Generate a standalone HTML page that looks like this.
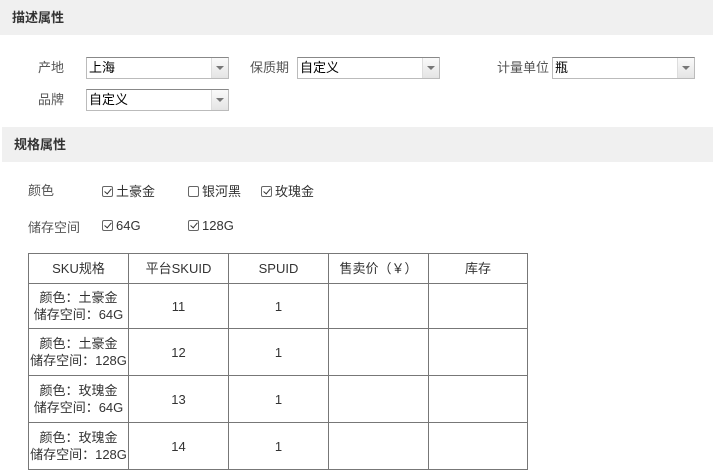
<!DOCTYPE html>
<html><head><meta charset="utf-8"><style>
*{margin:0;padding:0;box-sizing:border-box}
body{width:713px;height:469px;overflow:hidden;background:#fff;font-family:"Liberation Sans","Noto Sans CJK SC",sans-serif;font-size:13px;color:#333;position:relative}
.a{position:absolute;white-space:nowrap}
.hd{position:absolute;background:#f0f0f0;font-weight:bold;color:#333;padding-left:12px;line-height:35px;height:35px}
.lbl{color:#555}
.sel{position:absolute;height:22px;border:1px solid #bbb;border-top-color:#888;background:#fff;line-height:20px;padding-left:2px;color:#000}
.sel i{position:absolute;right:0;top:0;width:17px;height:20px;background:linear-gradient(#fafafa,#e4e4e4);border-left:1px solid #ddd}
.sel i:after{content:"";position:absolute;left:4px;top:8px;border-left:4px solid transparent;border-right:4px solid transparent;border-top:4px solid #777}
.cb{display:inline-block;width:11px;height:11px;border:1px solid #666;border-radius:2px;vertical-align:-1px;margin-right:3px;position:relative}
.cb.c:after{content:"";position:absolute;left:3px;top:0px;width:3px;height:6px;border:solid #333;border-width:0 1.5px 1.5px 0;transform:rotate(40deg)}
table{position:absolute;left:28px;top:253px;border-collapse:collapse;table-layout:fixed}
td{border:1px solid #777;text-align:center;font-size:13px;color:#333;line-height:17px;padding:0}
</style></head><body>
<div class="hd" style="left:0;top:0;width:713px">描述属性</div>
<div class="a lbl" style="left:38px;top:57px">产地</div>
<div class="sel" style="left:86px;top:57px;width:143px">上海<i></i></div>
<div class="a lbl" style="left:250px;top:57px">保质期</div>
<div class="sel" style="left:297px;top:57px;width:143px">自定义<i></i></div>
<div class="a lbl" style="left:497px;top:57px">计量单位</div>
<div class="sel" style="left:552px;top:57px;width:143px">瓶<i></i></div>
<div class="a lbl" style="left:38px;top:89px">品牌</div>
<div class="sel" style="left:86px;top:89px;width:143px">自定义<i></i></div>
<div class="hd" style="left:2px;top:127px;width:711px">规格属性</div>
<div class="a lbl" style="left:28px;top:180px">颜色</div>
<div class="a" style="left:102px;top:181px"><span class="cb c"></span>土豪金</div>
<div class="a" style="left:188px;top:181px"><span class="cb"></span>银河黑</div>
<div class="a" style="left:261px;top:181px"><span class="cb c"></span>玫瑰金</div>
<div class="a lbl" style="left:28px;top:217px">储存空间</div>
<div class="a" style="left:102px;top:218px"><span class="cb c"></span>64G</div>
<div class="a" style="left:188px;top:218px"><span class="cb c"></span>128G</div>
<table>
<colgroup><col style="width:100px"><col style="width:100px"><col style="width:100px"><col style="width:100px"><col style="width:99px"></colgroup>
<tr style="height:30px"><td>SKU规格</td><td>平台SKUID</td><td>SPUID</td><td>售卖价（￥）</td><td>库存</td></tr>
<tr style="height:45px"><td>颜色：土豪金<br>储存空间：64G</td><td>11</td><td>1</td><td></td><td></td></tr>
<tr style="height:47px"><td>颜色：土豪金<br>储存空间：128G</td><td>12</td><td>1</td><td></td><td></td></tr>
<tr style="height:47px"><td>颜色：玫瑰金<br>储存空间：64G</td><td>13</td><td>1</td><td></td><td></td></tr>
<tr style="height:47px"><td>颜色：玫瑰金<br>储存空间：128G</td><td>14</td><td>1</td><td></td><td></td></tr>
</table>
</body></html>
